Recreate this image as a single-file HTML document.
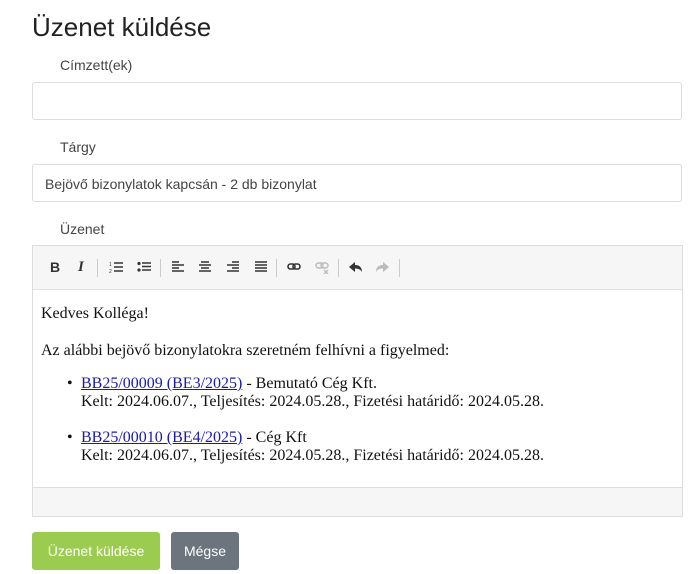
<!DOCTYPE html>
<html><head><meta charset="utf-8"><style>
body{margin:0;width:693px;height:574px;overflow:hidden;background:#fff;font-family:"Liberation Sans",sans-serif;color:#333;position:relative}
.a{position:absolute}
h1{position:absolute;left:32px;top:12px;margin:0;font-size:26px;font-weight:normal;color:#222}
.lbl{position:absolute;left:60px;font-size:14px;color:#444}
.inp{position:absolute;left:32px;width:650px;height:36px;border:1px solid #ddd;border-radius:3px;font-size:14px;color:#444;box-sizing:border-box}
.ed{position:absolute;left:32px;top:245px;width:651px;height:272px;border:1px solid #ddd;box-sizing:border-box}
.tb{height:43px;background:#f6f6f6;border-bottom:1px solid #e4e4e4;position:relative}
.ft{position:absolute;left:0;right:0;bottom:0;height:28px;background:#f6f6f6;border-top:1px solid #ddd}
.c{font-family:"Liberation Serif",serif;font-size:16px;color:#111;position:absolute;left:8px;top:0;line-height:18px}
.c p{margin:0;position:absolute;white-space:nowrap}
a{color:#1a1aa6}
.btn{position:absolute;top:532px;height:38px;border-radius:3px;color:#fff;font-size:14px;line-height:38px;text-align:center}
.sep{position:absolute;top:13px;width:1px;height:18px;background:#ccc}
.ic{position:absolute;top:14px}
</style></head><body>
<h1>Üzenet küldése</h1>
<div class="lbl" style="top:57px">Címzett(ek)</div>
<div class="inp" style="top:82px;height:38px"></div>
<div class="lbl" style="top:139px">Tárgy</div>
<div class="inp" style="top:164px;height:38px;padding:11px 12px">Bejövő bizonylatok kapcsán - 2 db bizonylat</div>
<div class="lbl" style="top:221px">Üzenet</div>
<div class="ed">
<div class="tb">
<div class="a" style="left:17px;top:13px;font-weight:bold;font-size:14px;color:#333">B</div>
<div class="a" style="left:45px;top:13px;font-style:italic;font-weight:bold;font-family:'Liberation Serif';font-size:15px;color:#333">I</div>
<div class="sep" style="left:64px"></div>
<svg class="ic" style="left:76px" width="14" height="14"><g stroke="#333" stroke-width="1.5"><path d="M5 3h9M5 7h9M5 11h9"/></g><text x="0" y="6" font-size="5" fill="#333">1</text><text x="0" y="13" font-size="5" fill="#333">2</text></svg>
<svg class="ic" style="left:104px" width="14" height="14"><g fill="#333"><circle cx="2" cy="3.5" r="1.6"/><circle cx="2" cy="10" r="1.6"/></g><g stroke="#333" stroke-width="1.5"><path d="M5 3h9M5 10h9M5 6.5h9"/></g></svg>
<div class="sep" style="left:127px"></div>
<svg class="ic" style="left:138px" width="14" height="14"><g stroke="#333" stroke-width="1.5"><path d="M1 2h7M1 5h12M1 8h7M1 11h12"/></g></svg>
<svg class="ic" style="left:165px" width="14" height="14"><g stroke="#333" stroke-width="1.5"><path d="M3 2h8M1 5h12M3 8h8M1 11h12"/></g></svg>
<svg class="ic" style="left:193px" width="14" height="14"><g stroke="#333" stroke-width="1.5"><path d="M6 2h7M1 5h12M6 8h7M1 11h12"/></g></svg>
<svg class="ic" style="left:221px" width="14" height="14"><g stroke="#333" stroke-width="1.5"><path d="M1 2h12M1 5h12M1 8h12M1 11h12"/></g></svg>
<div class="sep" style="left:243px"></div>
<svg class="ic" style="left:254px" width="14" height="14"><g stroke="#333" stroke-width="1.6" fill="none"><rect x="1" y="4" width="7" height="5" rx="2.5"/><rect x="6" y="4" width="7" height="5" rx="2.5"/></g></svg>
<svg class="ic" style="left:282px" width="14" height="14"><g stroke="#bbb" stroke-width="1.4" fill="none"><rect x="1" y="3" width="7" height="5" rx="2.5"/><rect x="6" y="3" width="7" height="5" rx="2.5"/><path d="M9 10l4 4M13 10l-4 4"/></g></svg>
<div class="sep" style="left:305px"></div>
<svg class="ic" style="left:315px" width="15" height="14"><path d="M1 7l6-5v3c4 0 7 2 7 7-1.5-2.5-3.5-3.5-7-3.5V12z" fill="#333"/></svg>
<svg class="ic" style="left:342px" width="15" height="14"><path d="M14 7L8 2v3C4 5 1 7 1 12c1.5-2.5 3.5-3.5 7-3.5V12z" fill="#bbb"/></svg>
<div class="sep" style="left:366px"></div>
</div>
<div class="c">
<p style="top:59px">Kedves Kolléga!</p>
<p style="top:96px">Az alábbi bejövő bizonylatokra szeretném felhívni a figyelmed:</p>
<p style="top:129px;left:26px">•</p><p style="top:129px;left:40px"><a href="#">BB25/00009 (BE3/2025)</a> - Bemutató Cég Kft.</p>
<p style="top:147px;left:40px">Kelt: 2024.06.07., Teljesítés: 2024.05.28., Fizetési határidő: 2024.05.28.</p>
<p style="top:183px;left:26px">•</p><p style="top:183px;left:40px"><a href="#">BB25/00010 (BE4/2025)</a> - Cég Kft</p>
<p style="top:201px;left:40px">Kelt: 2024.06.07., Teljesítés: 2024.05.28., Fizetési határidő: 2024.05.28.</p>
</div>
<div class="ft"></div>
</div>
<div class="btn" style="left:32px;width:128px;background:#9ccc4f">Üzenet küldése</div>
<div class="btn" style="left:171px;width:68px;background:#6c757d">Mégse</div>
</body></html>
